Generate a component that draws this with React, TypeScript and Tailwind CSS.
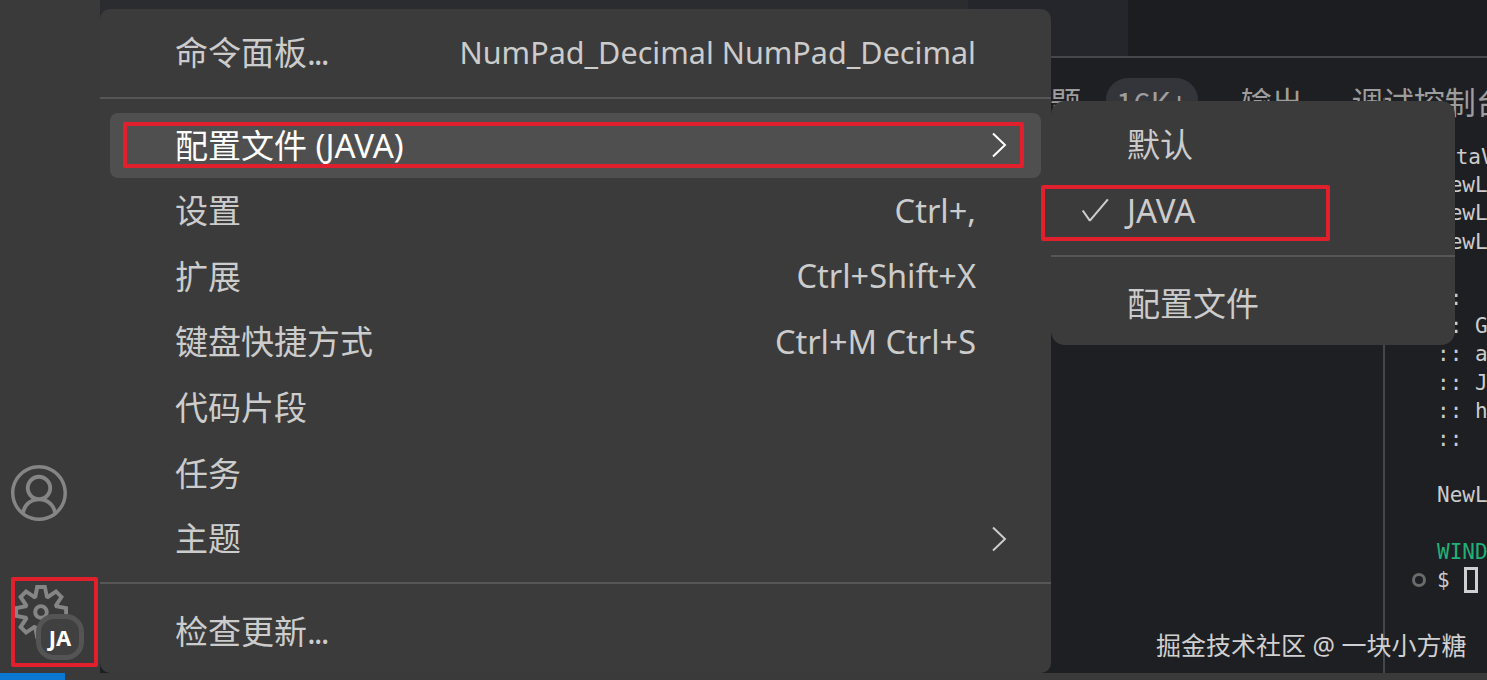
import React from "react";
import { VscAccount, VscSettingsGear, VscCheck } from "react-icons/vsc";

const ui = { fontFamily: '"Noto Sans", "Noto Sans CJK SC", sans-serif' };
const cjk = { fontFamily: '"Noto Sans CJK SC", sans-serif' };

function Chevron() {
  return (
    <svg width="16" height="26" viewBox="0 0 16 26" fill="none" stroke="currentColor" strokeWidth="2">
      <path d="M2 1.5 L14 13 L2 24.5" />
    </svg>
  );
}

function Item({ label, dots, hint, sub, active, small }: { label: string; dots?: boolean; hint?: string; sub?: boolean; active?: boolean; small?: boolean }) {
  return (
    <div
      className={`mx-[10px] flex h-[65.6px] items-center justify-between rounded-lg pl-[65px] pr-[65px] text-[33px] ${
        active ? "bg-[#4f4f4f] text-white" : "text-[#cccccc]"
      }`}
    >
      <span>
        {label}
        {dots && <span className="tracking-[-2px]">...</span>}
      </span>
      {hint && <span className={small ? "text-[30.55px]" : "text-[32.5px]"}>{hint}</span>}
      {sub && (
        <span className="-mr-[31px]">
          <Chevron />
        </span>
      )}
    </div>
  );
}

const term: { t: string; c?: string }[] = [
  { t: " taV", c: "pl-[6px]" },
  { t: "NewL" },
  { t: "NewL" },
  { t: "NewL" },
  { t: "" },
  { t: "::" },
  { t: ":: G" },
  { t: ":: a" },
  { t: ":: J" },
  { t: ":: h" },
  { t: "::" },
  { t: "" },
  { t: "NewL" },
  { t: "" },
  { t: "WIND", c: "text-[#23b078]" },
];

export default function App() {
  return (
    <div className="relative flex h-[680px] w-[1487px] overflow-hidden bg-[#1e1f23]" style={ui}>
      <aside className="flex w-[100px] shrink-0 flex-col items-start justify-end bg-[#3a3a3a] pb-[13px] pl-[11px] text-[#858585]">
        <VscAccount size={56} className="mb-[64px]" />
        <div className="relative mb-[22px] ml-[3px] h-[60px] w-[60px]">
          <VscSettingsGear size={54} />
          <div className="absolute left-[22px] top-[29px] flex h-[46px] w-[48px] items-center justify-center rounded-[18px] border-[5px] border-[#545454] bg-[#404040] text-[22px] font-bold text-white">
            JA
          </div>
        </div>
      </aside>

      <main className="flex min-w-0 flex-1 flex-col">
        <div className="flex h-[58px] shrink-0 border-b-2 border-[#46474a] bg-[#1c1d21]">
          <div className="w-[868px] bg-[#2b2c30]" />
          <div className="w-[160px] bg-[#25262b]" />
        </div>
        <div className="flex h-[40px] shrink-0 items-start pl-[919px] pt-[20px] text-[31px] text-[#9d9d9d]" style={cjk}>
          <span className="whitespace-nowrap">问题</span>
          <span className="ml-[25px] h-[44px] whitespace-nowrap rounded-[22px] bg-[#33353a] px-[10px] pt-[1px]">16K+</span>
          <span className="ml-[43px] whitespace-nowrap">输出</span>
          <span className="ml-[49px] whitespace-nowrap">调试控制台</span>
        </div>
        <div className="flex min-h-0 flex-1">
          <div className="w-[1285px] shrink-0 border-r-2 border-[#46474a]" />
          <div className="relative flex-1 pl-[52px] pt-[45px] text-[21px] leading-[28.2px] text-[#cccccc]" style={{ fontFamily: '"DejaVu Sans Mono", monospace' }}>
            {term.map((l, i) => (
              <div key={i} className={`h-[28.2px] whitespace-pre ${l.c ?? ""}`}>
                {l.t}
              </div>
            ))}
            <div className="flex h-[28.2px] items-center">
              <span className="absolute left-[27px] h-[14px] w-[14px] rounded-full border-[3px] border-[#6b6b6b]" />
              <span>$</span>
              <span className="ml-[14px] h-[26px] w-[14px] border-[3px] border-[#d0d0d0]" />
            </div>
          </div>
        </div>
        <div className="h-[7px] shrink-0 bg-[#3a3a3a]" />
      </main>

      <div className="absolute bottom-0 left-0 h-[7px] w-[65px] bg-[#0a78d0]" />

      {/* Main menu */}
      <div className="absolute left-[100px] top-[9px] flex h-[664px] w-[951px] flex-col rounded-[10px] bg-[#3b3b3b] pt-[11px]" style={ui}>
        <Item label="命令面板" dots hint="NumPad_Decimal NumPad_Decimal" small />
        <div className="mb-[14px] mt-[11px] h-[2px] bg-[#565656]" />
        <Item label="配置文件 (JAVA)" sub active />
        <Item label="设置" hint="Ctrl+," />
        <Item label="扩展" hint="Ctrl+Shift+X" />
        <Item label="键盘快捷方式" hint="Ctrl+M Ctrl+S" />
        <Item label="代码片段" />
        <Item label="任务" />
        <Item label="主题" sub />
        <div className="mb-[15px] mt-[10px] h-[2px] bg-[#565656]" />
        <Item label="检查更新" dots />
      </div>

      {/* Submenu */}
      <div className="absolute left-[1051px] top-[101px] flex h-[244px] w-[404px] flex-col rounded-[14px] bg-[#3b3b3b] pt-[11px] text-[33px] text-[#cccccc]">
        <div className="flex h-[65.6px] items-center pl-[76px]">默认</div>
        <div className="relative flex h-[65.6px] items-center pl-[76px]">
          <VscCheck size={34} className="absolute left-[27px]" />
          JAVA
        </div>
        <div className="mb-[14px] mt-[12px] h-[2px] bg-[#565656]" />
        <div className="flex h-[65.6px] items-center pl-[76px]">配置文件</div>
      </div>

      {/* Annotations */}
      <div className="absolute left-[123px] top-[122px] h-[46px] w-[901px] rounded-[2px] border-[4px] border-[#e0202c]" />
      <div className="absolute left-[1041px] top-[185px] h-[56px] w-[289px] rounded-[2px] border-[4px] border-[#e0202c]" />
      <div className="absolute left-[11px] top-[577px] h-[90px] w-[87px] rounded-[2px] border-[4px] border-[#e0202c]" />

      <div className="absolute left-[1156px] top-[627px] whitespace-nowrap text-[25px] leading-[36px] text-[#d0d0d0]">
        掘金技术社区 @ 一块小方糖
      </div>
    </div>
  );
}
